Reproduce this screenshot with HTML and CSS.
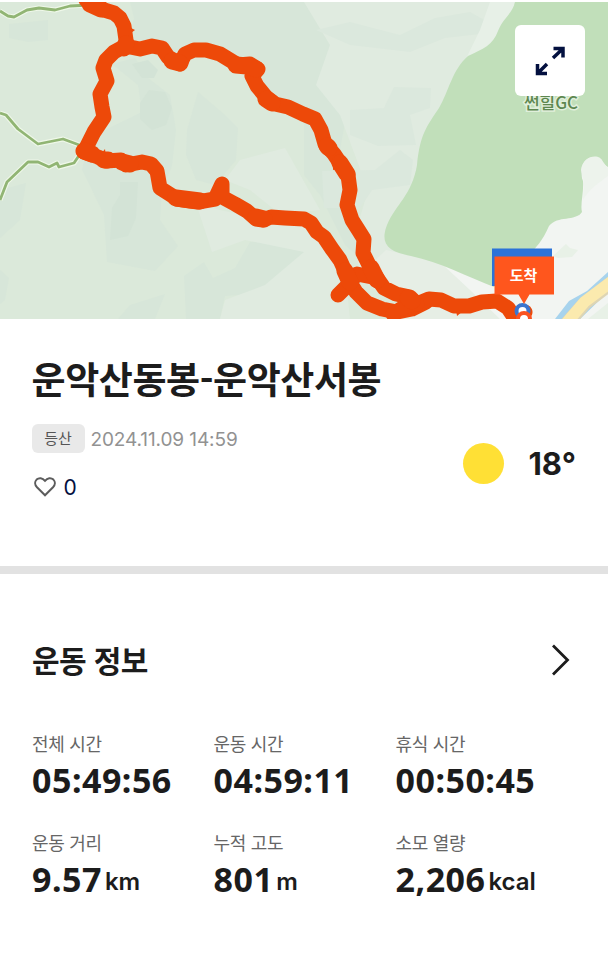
FILE: index.html
```
<!DOCTYPE html>
<html lang="ko">

<head>
    <meta charset="UTF-8">
    <meta name="viewport" content="width=device-width, initial-scale=1.0">
    <title>운악산동봉-운악산서봉</title>
    <link rel="stylesheet" href="styles.css">
</head>

<body>
    <div class="map">
        <svg class="map-canvas" width="608" height="317" viewBox="0 2 608 317">
            <rect y="2" width="608" height="317" fill="#dbe9da" />
            <!-- 지형 음영 -->
            <g fill="#d7e6d9">
                <path d="M130 2H304V110L250 92L246 62L205 46L165 58L128 45L134 18Z" />
                <path d="M9 24L48 20V40L28 42L9 38Z" />
                <path d="M112 64L135 58L148 78L170 95L176 130L172 166L162 190L160 220L178 246L155 271L107 262L104 215L91 188L82 170L86 152L105 130L142 112L138 85Z" />
                <path d="M187 130L198 92L225 115L238 128L236 160L215 185L196 180L186 155Z" />
                <path d="M0 190L26 183L20 220L0 238Z" />
                <path d="M184 276L204 262L213 278L235 268L250 242L304 235V290L225 296L220 319H186Z" />
                <path d="M130 305L165 294L155 319H118ZM0 270L9 278L5 300L0 304Z" />
                <path d="M304 2L340 30L350 95L340 150L350 220L375 270L345 245L320 195L304 175Z" />
            </g>
            <g fill="#e0ebe0">
                <path d="M304 2H515L502 40L468 58L450 90L430 125L420 160L410 188L385 230L392 250L460 270L495 288L520 319H430L360 280L355 235L368 190L340 115L316 85L330 45Z" />
                <path d="M196 203L220 210L260 219L304 219L345 270L350 319H220L225 300L265 285L304 252L245 240L212 252Z" />
                <path d="M240 160L285 148L320 210L280 214L250 190L225 180Z" />
            </g>
            <g fill="#dbe8dd">
                <path d="M316 30L350 22L400 35L435 18L470 12L488 22L480 34L445 38L410 52L350 45Z" />
                <path d="M350 110L384 108L394 87L431 88L430 108L410 115L416 145L378 146L350 135Z" />
                <path d="M322 171L375 170L400 150L413 160L410 185L372 190L360 208H324Z" />
            </g>
            <g fill="#d3e3d6">
                <path d="M140 103L149 90L165 92L172 108L166 125L152 130L140 119Z" />
                <path d="M132 64L148 60L158 70L154 78L142 78ZM112 208L120 195V182H138L136 218L128 236L110 240Z" />
            </g>
            <path d="M386 250L430 260L500 285L530 319H390L400 300L365 270Z" fill="#e6eee5" />
            <path d="M440 262L494 285L535 247L552 220L580 215L583 160L608 155V319H500L470 290Z" fill="#f2f5f2" />
            <path d="M515 2L502 40L468 58L458 75L480 30L490 2Z" fill="#e7f0e7" />
            <!-- 골프장 -->
            <path d="M515 2H608V167C602 164 603 157 594 157C584 157 578 168 583 181C584 192 580 205 582 212C575 222 558 215 549 226C542 242 536 247 530 254L494 287C468 277 440 262 411 256C387 252 380 243 387 225C396 204 412 195 417 165C420 134 427 126 439 108C449 91 452 70 468 56C483 49 493 45 498 31C503 18 513 13 515 2Z" fill="#c1dfba" />
            <path d="M581 170C583 155 600 153 603 162L608 168V176C600 182 588 190 583 200L584 182Z" fill="#edf3ec" />
            <path d="M553 256L566 244L570 248L578 250L572 257L558 258ZM588 319L608 303V319Z" fill="#e8f1e7" />
            <!-- 강과 도로 -->
            <path d="M555 319L569 301L587 291L608 272V292L580 319Z" fill="#a7d3ed" />
            <path d="M563 328L585 303L614 281" fill="none" stroke="#ded5b4" stroke-width="14" />
            <path d="M563 327L584.500 302L613 280.500" fill="none" stroke="#fbeaae" stroke-width="11.500" />
            <!-- 등산로 -->
            <g fill="none" stroke="#eff8e9" stroke-width="5" stroke-linejoin="round">
                <path d="M0 11L8 16L14 17L27 10L39 8L55 10L70 6L90 5" />
                <path d="M0 113L6 115L18 129L38 144L63 139L82 146" />
                <path d="M0 200L7 182L28 162H38L49 167L57 163L59 167L74 163L80 154" />
            </g>
            <g fill="none" stroke="#91b574" stroke-width="2.800" stroke-linejoin="round">
                <path d="M0 11L8 16L14 17L27 10L39 8L55 10L70 6L90 5" />
                <path d="M0 113L6 115L18 129L38 144L63 139L82 146" />
                <path d="M0 200L7 182L28 162H38L49 167L57 163L59 167L74 163L80 154" />
            </g>
            <!-- 기록 경로 -->
            <g fill="none" stroke="#ed4909" stroke-width="15" stroke-linejoin="round" stroke-linecap="round">
                <path d="M86 0L92 4L101 9L114 13L120 18L124 26L126 40L125 46L114 52L106 60L103 68L107 81L100 94L102 107L104 117L94 132L88 144L84 152L98 157L106 161L121 160L126 165L142 162L151 164L157 171L160 188L171 195L177 199L190 201L198 202L215 199L222 184L222 197L235 204L247 211L256 219L263 220L271 217L285 218L304 219L311 223L317 232L324 237L332 249L340 260L345 271L349 281L356 292L367 303L382 309L397 312L412 309L426 302" />
                <path d="M125 46L140 49L152 46L162 48L168 57L180 64L185 54L194 50L206 50L220 54L238 65L250 64L258 69L252 76L257 86L266 97L275 104L288 107L303 114L315 119L321 130L325 144L334 154L342 166L348 175L350 190L347 205L352 220L359 231L364 239L363 253L369 265L375 275L384 288L396 294L410 297L417 304L429 299L441 300L454 306L469 306L482 302L497 301L508 308L514 317L525 312" />
                <path d="M372 277L357 274L347 286L338 295" />
                <path d="M417 304L407 305L393 314" />
            </g>
            <g fill="none" stroke="#ed4909" stroke-width="17" stroke-linejoin="round" stroke-linecap="round">
                <path d="M90 4L101 9M126 44L124 48M172 61L180 63M236 65L247 66L256 69M266 99L272 103M84 151L92 154M104 160L108 160M122 162L130 164M176 198L200 201M256 217L264 219M327 146L329 148M340 163L347 174M345 271L350 282M371 268L377 280M408 298L412 301" />
            </g>
            <path d="M131 28L135 30L131 33ZM101 154L105 149L106 157ZM333 163L333 170L340 168ZM456 310L457 316L463 311Z" fill="#ed4909" />
            <!-- 출발 / 도착 표시 -->
            <path d="M492 248.500H552V286H492Z" fill="#2b73d8" />
            <circle cx="522.500" cy="311" r="6" fill="#fff" stroke="#3b75ce" stroke-width="4" />
            <circle cx="524" cy="319" r="6" fill="#fff" stroke="#fb5321" stroke-width="4" />
            <path d="M494.500 256.500H554V294.500H529.500L524 304L518.500 294.500H494.500Z" fill="#ff561d" />
            <text class="marker-label" x="523.500" y="281" text-anchor="middle">도착</text>
            <text class="place-label" x="551" y="108.500" text-anchor="middle">썬힐GC</text>
        </svg>
        <button class="expand-button" aria-label="지도 확대">
            <svg width="70" height="71" viewBox="0 0 70 71" fill="none" stroke="#03103f" stroke-width="3.500">
                <path d="M38.500 23.500H48V32.500M47.500 24L38 33" />
                <path d="M22.500 39V48.500H32M23 48L32 39" />
            </svg>
        </button>
    </div>

    <div class="summary">
        <h1>운악산동봉-운악산서봉</h1>
        <div class="summary-row">
            <div>
                <div class="meta">
                    <span class="tag">등산</span>
                    <span class="date">2024.11.09 14:59</span>
                </div>
                <div class="likes">
                    <svg width="22" height="20" viewBox="0 0 22 20" fill="none" stroke="#5c5c5c" stroke-width="2">
                        <path d="M11 18.300L3 10.300C.5 7.600 .7 4.500 2.600 2.600C5 .4 8.500 .8 11 3.800C13.500 .8 17 .4 19.400 2.600C21.300 4.500 21.500 7.600 19 10.300Z" />
                    </svg>
                    <span>0</span>
                </div>
            </div>
            <div class="weather">
                <span class="sun"></span>
                <span class="temp">18°</span>
            </div>
        </div>
    </div>

    <div class="info">
        <div class="info-header">
            <h2>운동 정보</h2>
            <svg width="20" height="32" viewBox="0 0 20 32" fill="none" stroke="#1c1c1c" stroke-width="2.800">
                <path d="M2 1.500L16.500 16L2 30.500" />
            </svg>
        </div>
        <div class="stats">
            <div class="stat">
                <div class="label">전체 시간</div>
                <div class="value">05:49:56</div>
            </div>
            <div class="stat">
                <div class="label">운동 시간</div>
                <div class="value">04:59:11</div>
            </div>
            <div class="stat">
                <div class="label">휴식 시간</div>
                <div class="value">00:50:45</div>
            </div>
            <div class="stat">
                <div class="label">운동 거리</div>
                <div class="value">9.57<span class="unit">km</span></div>
            </div>
            <div class="stat">
                <div class="label">누적 고도</div>
                <div class="value">801<span class="unit">m</span></div>
            </div>
            <div class="stat">
                <div class="label">소모 열량</div>
                <div class="value">2,206<span class="unit">kcal</span></div>
            </div>
        </div>
    </div>
</body>

</html>
```
FILE: styles.css
```
* {
    box-sizing: border-box;
}

body {
    margin: 0;
    background-color: #fff;
    color: #1c1c1c;
    font-family: Inter, 'Noto Sans CJK KR', sans-serif;
}

h1,
h2 {
    margin: 0;
    font-family: 'Noto Sans CJK KR', sans-serif;
    font-weight: 700;
    white-space: nowrap;
}

.map {
    position: relative;
    height: 319px;
    padding-top: 2px;
}

.map-canvas {
    display: block;
}

.marker-label {
    font: 700 15px 'Noto Sans CJK KR', sans-serif;
    fill: #fff;
}

.place-label {
    font: 500 17px 'Noto Sans CJK KR', sans-serif;
    fill: #5d8750;
    stroke: #e0efdb;
    stroke-width: 3px;
    paint-order: stroke;
}

.expand-button {
    position: absolute;
    top: 25px;
    right: 23px;
    width: 70px;
    height: 71px;
    padding: 0;
    border: none;
    border-radius: 6px;
    background-color: #fff;
}

.expand-button svg {
    display: block;
}

.summary {
    height: 255px;
    padding: 34px 32px 0 31.5px;
    border-bottom: 8px solid #e2e2e2;
}

h1 {
    font-size: 37px;
    line-height: 50px;
    letter-spacing: -0.4px;
}

.summary-row {
    display: flex;
    justify-content: space-between;
    padding-top: 21px;
}

.meta {
    display: flex;
    align-items: center;
    gap: 6px;
}

.tag {
    width: 53px;
    height: 29px;
    border-radius: 6px;
    background-color: #e9e9e9;
    color: #555;
    font-size: 15px;
    line-height: 29px;
    text-align: center;
}

.date {
    padding-top: 1px;
    color: #929292;
    font-size: 19px;
    letter-spacing: -0.1px;
}

.likes {
    display: flex;
    align-items: center;
    gap: 8px;
    margin-top: 20px;
    padding-left: 2px;
    color: #03103f;
    font-size: 21px;
    line-height: 28px;
}

.likes svg {
    margin-bottom: 2px;
}

.likes span {
    padding-top: 1px;
}

.weather {
    display: flex;
    align-items: center;
    gap: 24px;
    height: 42px;
    margin-top: 18px;
}

.sun {
    width: 41px;
    height: 41px;
    border-radius: 50%;
    background-color: #ffe035;
}

.temp {
    padding-top: 1px;
    font-size: 31px;
    font-weight: 700;
}

.info {
    padding: 62px 32px 0;
}

.info-header {
    display: flex;
    align-items: center;
    justify-content: space-between;
    height: 48px;
    padding-right: 5px;
}

h2 {
    font-size: 30px;
    line-height: 46px;
    letter-spacing: -0.6px;
    padding-bottom: 2px;
}

.stats {
    display: grid;
    grid-template-columns: 181.5px 182px 1fr;
    row-gap: 31px;
    padding-top: 48px;
}

.stat {
    height: 68px;
}

.label {
    color: #666;
    font-size: 18px;
    line-height: 26px;
    letter-spacing: -0.3px;
}

.value {
    margin-top: -2px;
    font-family: 'Noto Sans', sans-serif;
    font-size: 34px;
    font-weight: 700;
    line-height: 48px;
    letter-spacing: 0.5px;
    white-space: nowrap;
}

.unit {
    margin-left: 3px;
    font-family: Inter, sans-serif;
    font-size: 24px;
    font-weight: 600;
    letter-spacing: 0;
    line-height: 1;
    vertical-align: 2px;
}
```
